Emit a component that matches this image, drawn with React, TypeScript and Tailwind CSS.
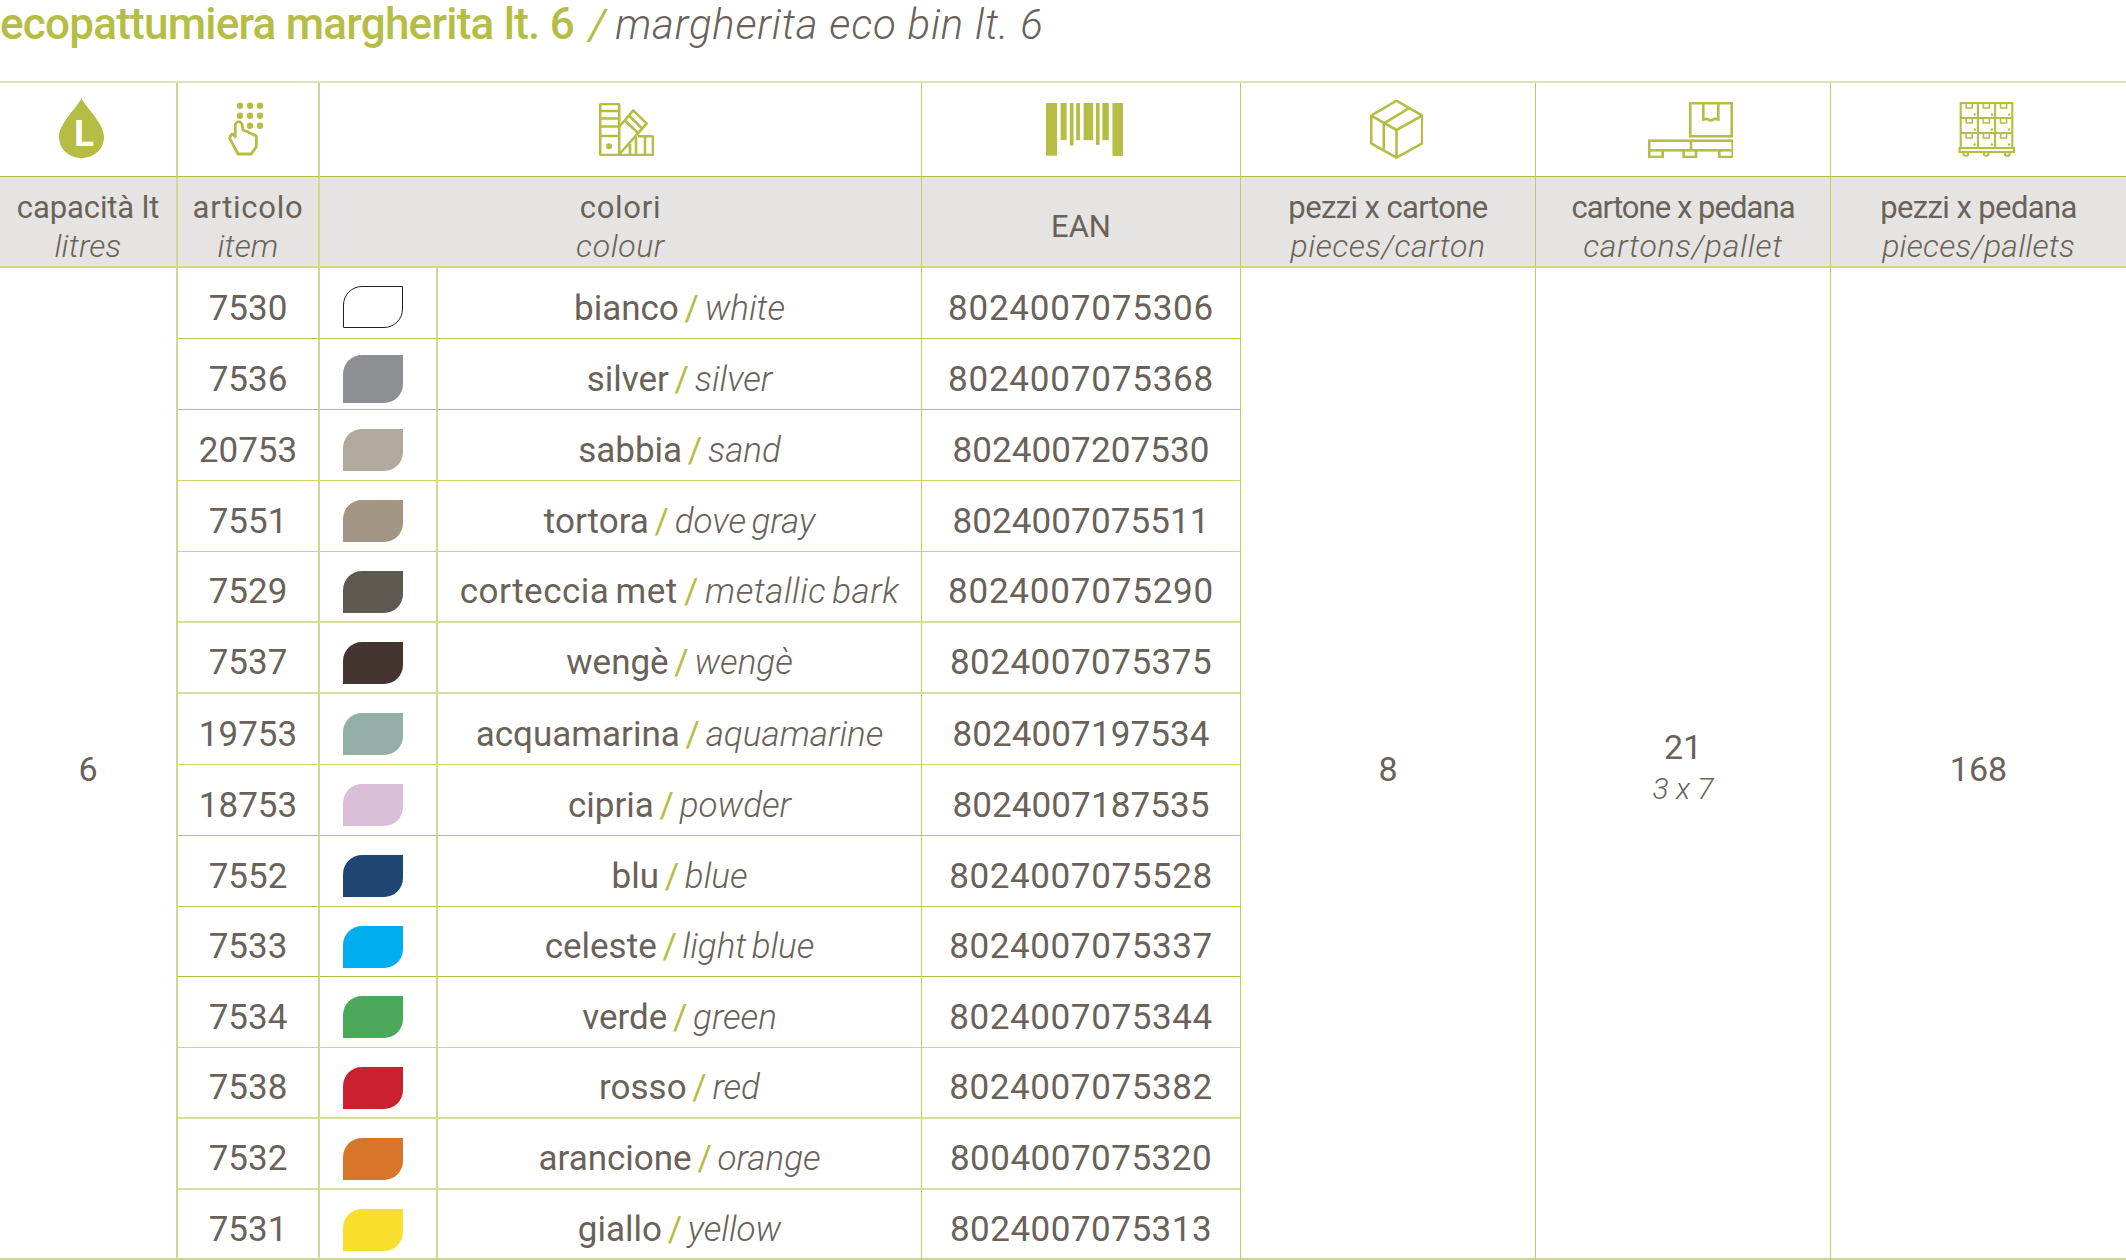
import React from "react";

const rows = [
  { item: "7530", it: "bianco", en: "white", ean: "8024007075306", swatch: "bg-white border border-[#222] mt-[18px] h-[42px]", h: "h-[71px]", line: "border-b border-[#bcc34f]", eanWidth: "tracking-[0.8px]" },
  { item: "7536", it: "silver", en: "silver", ean: "8024007075368", swatch: "bg-[#8e8f93] mt-[16px] h-[48px]", h: "h-[71px]", line: "border-b border-[#bcc34f]", eanWidth: "tracking-[0.8px]" },
  { item: "20753", it: "sabbia", en: "sand", ean: "8024007207530", swatch: "bg-[#b1a99c] mt-[19px] h-[42px]", h: "h-[71px]", line: "border-b border-[#cdd36f]", eanWidth: "tracking-[0.1px]" },
  { item: "7551", it: "tortora", en: "dove gray", ean: "8024007075511", swatch: "bg-[#a29583] mt-[19px] h-[42px]", h: "h-[71px]", line: "border-b border-[#cdd36f]", eanWidth: "tracking-[0.1px]" },
  { item: "7529", it: "corteccia met", en: "metallic bark", ean: "8024007075290", swatch: "bg-[#5d5850] mt-[19px] h-[42px]", h: "h-[71px]", line: "border-b-2 border-[#d8de9c]", eanWidth: "tracking-[0.8px]" },
  { item: "7537", it: "wengè", en: "wengè", ean: "8024007075375", swatch: "bg-[#443530] mt-[19px] h-[42px]", h: "h-[71px]", line: "border-b-2 border-[#d8de9c]", eanWidth: "tracking-[0.5px]" },
  { item: "19753", it: "acquamarina", en: "aquamarine", ean: "8024007197534", swatch: "bg-[#93aea6] mt-[19px] h-[42px]", h: "h-[71px]", line: "border-b border-[#cdd36f]", eanWidth: "tracking-[0.1px]" },
  { item: "18753", it: "cipria", en: "powder", ean: "8024007187535", swatch: "bg-[#dbbfd9] mt-[19px] h-[42px]", h: "h-[71px]", line: "border-b border-[#bcc34f]", eanWidth: "tracking-[0.1px]" },
  { item: "7552", it: "blu", en: "blue", ean: "8024007075528", swatch: "bg-[#204774] mt-[19px] h-[42px]", h: "h-[71px]", line: "border-b border-[#bcc34f]", eanWidth: "tracking-[0.6px]" },
  { item: "7533", it: "celeste", en: "light blue", ean: "8024007075337", swatch: "bg-[#00aeef] mt-[19px] h-[42px]", h: "h-[70px]", line: "border-b border-[#b5bd44]", eanWidth: "tracking-[0.6px]" },
  { item: "7534", it: "verde", en: "green", ean: "8024007075344", swatch: "bg-[#4aa858] mt-[19px] h-[42px]", h: "h-[71px]", line: "border-b border-[#d0d680]", eanWidth: "tracking-[0.6px]" },
  { item: "7538", it: "rosso", en: "red", ean: "8024007075382", swatch: "bg-[#cb202f] mt-[19px] h-[42px]", h: "h-[71px]", line: "border-b-2 border-[#d8de9c]", eanWidth: "tracking-[0.6px]" },
  { item: "7532", it: "arancione", en: "orange", ean: "8004007075320", swatch: "bg-[#d9752a] mt-[19px] h-[42px]", h: "h-[71px]", line: "border-b-2 border-[#d8de9c]", eanWidth: "tracking-[0.5px]" },
  { item: "7531", it: "giallo", en: "yellow", ean: "8024007075313", swatch: "bg-[#f9df2d] mt-[19px] h-[42px]", h: "h-[70px]", line: "border-b-2 border-[#cfd58a]", eanWidth: "tracking-[0.5px]" },
];

const Head = ({ a, b, className = "", aTrack, bTrack, colSpan }: { a: string; b: string; className?: string; aTrack: string; bTrack: string; colSpan?: number }) => (
  <th colSpan={colSpan} className={`bg-[#e5e4e2] font-normal align-middle pt-[10px] border-b-2 border-b-[#d3d98c] ${className}`}>
    <div className={`text-[31px] leading-[38px] ${aTrack}`}>{a}</div>
    <div className={`text-[32px] leading-[38px] font-light italic ${bTrack}`}>{b}</div>
  </th>
);

const DropIcon = () => (
  <svg width="45" height="60" viewBox="0 0 45 60" className="mr-[14px] mb-[3px]">
    <path d="M22.5 0C27 10 45 25 45 39C45 51 35 60 22.5 60C10 60 0 51 0 39C0 25 18 10 22.5 0Z" fill="#b6bd45" />
    <text x="15" y="48" fontFamily="Roboto" fontWeight="700" fontSize="37" fill="#fff">L</text>
  </svg>
);

const HandIcon = () => (
  <svg width="40" height="60" viewBox="230 100 40 60" fill="none" stroke="#b6bd45" strokeWidth="2.8" strokeLinejoin="round">
    {[[242, 105.7], [252, 105.7], [262, 105.7], [242, 115.7], [252, 115.7], [262, 115.7], [252, 125.7], [262, 125.7]].map(([x, y]) => (
      <circle key={`${x}-${y}`} cx={x} cy={y} r="3.2" fill="#b6bd45" stroke="none" />
    ))}
    <path d="M237.3 136.7V124.3Q241 119 244 124.3L245 130L250 132L258.3 136V146.7L253.3 154H240L231.7 138.3Q233 133.5 235 134.3L237.3 136.7Z" />
  </svg>
);

const FanIcon = () => (
  <svg width="55" height="53" viewBox="599 100 55 53" fill="none" stroke="#b6bd45" strokeWidth="2.6" strokeLinejoin="round" className="ml-[12px]">
    <rect x="600.2" y="101" width="19" height="51" rx="1.5" />
    <path d="M600 108H619M600 115.5H619M600 123.5H619M600 133H619" />
    <circle cx="609" cy="143.3" r="3" fill="#b6bd45" stroke="none" />
    <path d="M619 124L633.3 107.3L646.7 120.7L619.5 151" />
    <path d="M625 117.5L638 130M629 112.5L642 125.5" />
    <path d="M638 133.3H651.5Q653 133.3 653 135V150.5Q653 152 651.5 152H619.5" />
    <path d="M630 141V152M636 133.5V152M645 133.5V152" />
  </svg>
);

const BarcodeIcon = () => (
  <svg width="77" height="53" viewBox="0 0 168 157" preserveAspectRatio="none" fill="#b6bd45" className="ml-[6px]">
    <rect x="0" y="0" width="24" height="156" />
    <rect x="32" y="0" width="13" height="110" />
    <rect x="52" y="0" width="8" height="126" />
    <rect x="66" y="0" width="8" height="110" />
    <rect x="82" y="0" width="21" height="110" />
    <rect x="109" y="0" width="8" height="124" />
    <rect x="123" y="0" width="14" height="110" />
    <rect x="145" y="0" width="23" height="157" />
  </svg>
);

const BoxIcon = () => (
  <svg width="53" height="59" viewBox="1369.5 100 53 59" fill="none" stroke="#b6bd45" strokeWidth="2.6" strokeLinejoin="round" className="ml-[16px]">
    <path d="M1396 100.7L1421.7 115.7V143.3L1396 157.7L1370.7 143.3V115.7Z" />
    <path d="M1370.7 115.7L1396 130L1421.7 115.7M1396 130V157.7" />
    <path d="M1408.3 108.3L1383.3 123.3V149.3" />
  </svg>
);

const PalletIcon = () => (
  <svg width="85" height="56" viewBox="1647 103 85 56" fill="none" stroke="#b6bd45" strokeWidth="2.6" className="ml-[14px]">
    <rect x="1689.2" y="104.2" width="41.5" height="33" />
    <path d="M1702.3 104V120.5Q1706 119 1708 121Q1711 122 1713 120Q1715 119.5 1717.3 120.5V104" />
    <rect x="1648.2" y="141.7" width="83.5" height="9.6" />
    <path d="M1690 141.7V151.3" />
    <path d="M1648.2 151.3V158H1661.7V151.3M1682.7 151.3V158H1695V151.3M1718.3 151.3V158H1731.7V151.3" />
  </svg>
);

const StackIcon = () => {
  const cols = [1960.7, 1977.9, 1995.1];
  const lines = [103.5, 118.5, 133.5];
  return (
    <svg width="58" height="55" viewBox="1958 102.5 58 55" fill="none" stroke="#b6bd45" strokeWidth="2.1" className="ml-[16px]">
      <rect x="1960.7" y="103.5" width="51.6" height="45" />
      <path d="M1977.9 103.5V148.5M1995.1 103.5V148.5M1960.7 118.5H2012.3M1960.7 133.5H2012.3" />
      {cols.map((x) =>
        lines.map((y) => (
          <g key={`${x}-${y}`}>
            <path d={`M${x + 5.5} ${y}V${y + 5}H${x + 11.5}V${y}`} strokeWidth="1.6" />
            <circle cx={x + 14} cy={y + 11.5} r="1.2" fill="#b6bd45" stroke="none" />
          </g>
        ))
      )}
      <rect x="1959.5" y="148.5" width="54.5" height="4" />
      <path d="M1963.5 152.5V155.5Q1965.7 157 1968 155.5V152.5M1984 152.5V155.5Q1986 157 1988.3 155.5V152.5M2005 152.5V155.5Q2007.3 157 2009.6 155.5V152.5" />
    </svg>
  );
};

const IconCell = ({ children, className = "", colSpan }: { children: React.ReactNode; className?: string; colSpan?: number }) => (
  <td colSpan={colSpan} className={`border-b border-b-[#b5bd44] ${className}`}>
    <div className="flex items-center justify-center">{children}</div>
  </td>
);

export default function App() {
  return (
    <div className="w-[2126px] h-[1260px] overflow-hidden bg-white font-[Roboto,sans-serif] text-[#6a6259]">
      <div className="h-[81px] flex items-baseline">
        <span className="text-[44px] leading-[48px] font-medium text-[#b6bd45] tracking-[-0.75px]">ecopattumiera margherita lt. 6</span>
        <span className="ml-[15px] text-[42px] leading-[48px] font-light italic tracking-[0.8px]">
          <span className="text-[#b6bd45] font-normal tracking-[-0.5px]">/ </span>margherita eco bin lt. 6
        </span>
      </div>
      <table className="w-[2126px] table-fixed border-separate border-spacing-0 border-t-2 border-[#dde3a8] text-center">
        <colgroup>
          <col className="w-[178px]" />
          <col className="w-[142px]" />
          <col className="w-[118px]" />
          <col className="w-[484px]" />
          <col className="w-[319px]" />
          <col className="w-[295px]" />
          <col className="w-[295px]" />
          <col className="w-[295px]" />
        </colgroup>
        <thead>
          <tr className="h-[94px]">
            <IconCell className="border-r-2 border-r-[#d3d98c]"><DropIcon /></IconCell>
            <IconCell className="border-r-2 border-r-[#d3d98c]"><HandIcon /></IconCell>
            <IconCell className="border-r border-r-[#c3ca5f]" colSpan={2}><FanIcon /></IconCell>
            <IconCell className="border-r border-r-[#c3ca5f]"><BarcodeIcon /></IconCell>
            <IconCell className="border-r border-r-[#c3ca5f]"><BoxIcon /></IconCell>
            <IconCell className="border-r border-r-[#c3ca5f]"><PalletIcon /></IconCell>
            <IconCell><StackIcon /></IconCell>
          </tr>
          <tr className="h-[91px]">
            <Head a="capacità lt" b="litres" aTrack="tracking-[-0.1px]" bTrack="tracking-[0.2px]" className="border-r-2 border-r-[#d3d98c]" />
            <Head a="articolo" b="item" aTrack="tracking-[0.75px]" bTrack="tracking-[0.1px]" className="border-r-2 border-r-[#d3d98c]" />
            <Head a="colori" b="colour" colSpan={2} aTrack="tracking-[0.75px]" bTrack="tracking-[0.6px]" className="border-r border-r-[#c3ca5f]" />
            <th className="bg-[#e5e4e2] font-normal text-[31px] pt-[12px] border-b-2 border-b-[#d3d98c] border-r border-r-[#c3ca5f]">EAN</th>
            <Head a="pezzi x cartone" b="pieces/carton" aTrack="tracking-[-0.6px]" bTrack="tracking-[0.5px]" className="border-r border-r-[#c3ca5f]" />
            <Head a="cartone x pedana" b="cartons/pallet" aTrack="tracking-[-0.95px]" bTrack="tracking-[0.7px]" className="border-r border-r-[#c3ca5f]" />
            <Head a="pezzi x pedana" b="pieces/pallets" aTrack="tracking-[-0.6px]" bTrack="tracking-[0.2px]" />
          </tr>
        </thead>
        <tbody>
          {rows.map((r, i) => (
            <tr key={r.item} className={r.h}>
              {i === 0 && (
                <td rowSpan={14} className="text-[34px] pt-[12px] border-b-2 border-r-2 border-b-[#cfd58a] border-r-[#d3d98c]">6</td>
              )}
              <td className={`text-[35px] pt-[12px] border-r-2 border-r-[#d3d98c] ${r.line}`}>{r.item}</td>
              <td className={`align-top border-r-2 border-r-[#d3d98c] ${r.line}`}>
                <div className={`w-[60px] ml-[23px] rounded-tl-[19px] rounded-br-[19px] ${r.swatch}`} />
              </td>
              <td className={`text-[35px] pt-[12px] whitespace-nowrap [word-spacing:-3px] border-r border-r-[#c3ca5f] ${r.item === "7529" ? "tracking-[0.5px]" : ""} ${r.line}`}>
                {r.it} <span className="text-[#b6bd45]">/</span> <span className="italic font-light">{r.en}</span>
              </td>
              <td className={`text-[35px] pt-[12px] border-r border-r-[#c3ca5f] ${r.eanWidth} ${r.line}`}>{r.ean}</td>
              {i === 0 && (
                <>
                  <td rowSpan={14} className="text-[34px] pt-[12px] border-b-2 border-r border-b-[#cfd58a] border-r-[#c3ca5f]">8</td>
                  <td rowSpan={14} className="pt-[12px] border-b-2 border-r border-b-[#cfd58a] border-r-[#c3ca5f]">
                    <div className="text-[34px] leading-[40px]">21</div>
                    <div className="text-[30px] leading-[44px] italic font-light">3 x 7</div>
                  </td>
                  <td rowSpan={14} className="text-[34px] pt-[12px] border-b-2 border-b-[#cfd58a]">168</td>
                </>
              )}
            </tr>
          ))}
        </tbody>
      </table>
    </div>
  );
}
